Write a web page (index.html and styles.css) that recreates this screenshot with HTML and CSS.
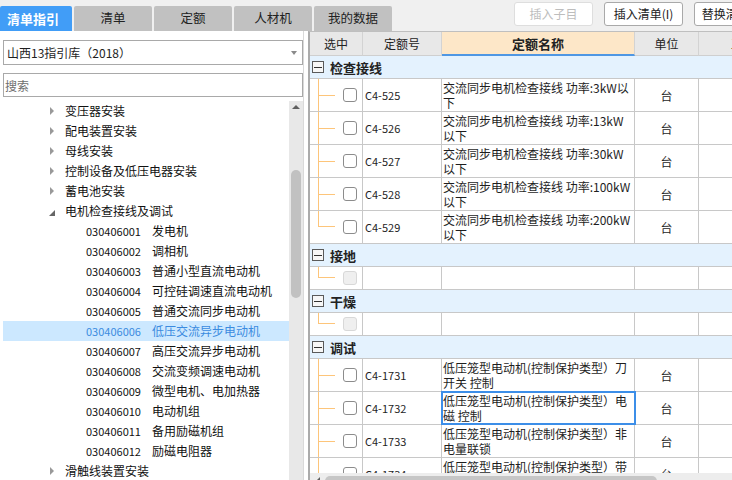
FILE: index.html
```html
<!DOCTYPE html>
<html lang="zh-CN">
<head>
<meta charset="utf-8">
<title>清单指引</title>
<link rel="stylesheet" href="styles.css">
</head>
<body>
<header class="topbar">
  <nav class="tabs">
    <div class="tab active">清单指引</div>
    <div class="tab">清单</div>
    <div class="tab">定额</div>
    <div class="tab">人材机</div>
    <div class="tab">我的数据</div>
  </nav>
  <div class="actions">
    <button class="btn" disabled>插入子目</button>
    <button class="btn">插入清单(I)</button>
    <button class="btn">替换清单(R)</button>
  </div>
</header>
<main class="main">
  <aside class="left">
    <div class="select"><span>山西13指引库（2018）</span><span class="caret"></span></div>
    <input class="search" type="text" placeholder="搜索">
    <div class="tree-wrap">
      <ul class="tree">
        <li class="node"><span class="arrow"></span>变压器安装</li>
        <li class="node"><span class="arrow"></span>配电装置安装</li>
        <li class="node"><span class="arrow"></span>母线安装</li>
        <li class="node"><span class="arrow"></span>控制设备及低压电器安装</li>
        <li class="node"><span class="arrow"></span>蓄电池安装</li>
        <li class="node"><span class="arrow open"></span>电机检查接线及调试</li>
        <li class="node leaf"><span class="code">030406001</span>发电机</li>
        <li class="node leaf"><span class="code">030406002</span>调相机</li>
        <li class="node leaf"><span class="code">030406003</span>普通小型直流电动机</li>
        <li class="node leaf"><span class="code">030406004</span>可控硅调速直流电动机</li>
        <li class="node leaf"><span class="code">030406005</span>普通交流同步电动机</li>
        <li class="node leaf sel"><span class="code">030406006</span>低压交流异步电动机</li>
        <li class="node leaf"><span class="code">030406007</span>高压交流异步电动机</li>
        <li class="node leaf"><span class="code">030406008</span>交流变频调速电动机</li>
        <li class="node leaf"><span class="code">030406009</span>微型电机、电加热器</li>
        <li class="node leaf"><span class="code">030406010</span>电动机组</li>
        <li class="node leaf"><span class="code">030406011</span>备用励磁机组</li>
        <li class="node leaf"><span class="code">030406012</span>励磁电阻器</li>
        <li class="node"><span class="arrow"></span>滑触线装置安装</li>
      </ul>
      <div class="vscroll"><span class="up"></span><span class="thumb"></span></div>
    </div>
  </aside>
  <div class="splitter"></div>
  <section class="right">
    <div class="ghead">
      <div class="h c1">选中</div>
      <div class="h c2">定额号</div>
      <div class="h c3 name">定额名称</div>
      <div class="h c4">单位</div>
      <div class="h c5 more">工程量</div>
    </div>
    <div class="gbody">
      <div class="grp"><span class="minus"></span>检查接线</div>
      <div class="row">
        <div class="c c1 tc"><span class="branch"></span><span class="cb"></span></div>
        <div class="c c2">C4-525</div>
        <div class="c c3">交流同步电机检查接线 功率:3kW以<br>下</div>
        <div class="c c4">台</div>
        <div class="c c5"></div>
      </div>
      <div class="row">
        <div class="c c1 tc"><span class="branch"></span><span class="cb"></span></div>
        <div class="c c2">C4-526</div>
        <div class="c c3">交流同步电机检查接线 功率:13kW<br>以下</div>
        <div class="c c4">台</div>
        <div class="c c5"></div>
      </div>
      <div class="row">
        <div class="c c1 tc"><span class="branch"></span><span class="cb"></span></div>
        <div class="c c2">C4-527</div>
        <div class="c c3">交流同步电机检查接线 功率:30kW<br>以下</div>
        <div class="c c4">台</div>
        <div class="c c5"></div>
      </div>
      <div class="row">
        <div class="c c1 tc"><span class="branch"></span><span class="cb"></span></div>
        <div class="c c2">C4-528</div>
        <div class="c c3">交流同步电机检查接线 功率:100kW<br>以下</div>
        <div class="c c4">台</div>
        <div class="c c5"></div>
      </div>
      <div class="row">
        <div class="c c1 tc"><span class="branch last"></span><span class="cb"></span></div>
        <div class="c c2">C4-529</div>
        <div class="c c3">交流同步电机检查接线 功率:200kW<br>以下</div>
        <div class="c c4">台</div>
        <div class="c c5"></div>
      </div>
      <div class="grp"><span class="minus"></span>接地</div>
      <div class="row short">
        <div class="c c1 tc"><span class="branch last"></span><span class="cb off"></span></div>
        <div class="c c2"></div>
        <div class="c c3"></div>
        <div class="c c4"></div>
        <div class="c c5"></div>
      </div>
      <div class="grp"><span class="minus"></span>干燥</div>
      <div class="row short">
        <div class="c c1 tc"><span class="branch last"></span><span class="cb off"></span></div>
        <div class="c c2"></div>
        <div class="c c3"></div>
        <div class="c c4"></div>
        <div class="c c5"></div>
      </div>
      <div class="grp"><span class="minus"></span>调试</div>
      <div class="row">
        <div class="c c1 tc"><span class="branch"></span><span class="cb"></span></div>
        <div class="c c2">C4-1731</div>
        <div class="c c3">低压笼型电动机(控制保护类型）刀<br>开关 控制</div>
        <div class="c c4">台</div>
        <div class="c c5"></div>
      </div>
      <div class="row">
        <div class="c c1 tc"><span class="branch"></span><span class="cb"></span></div>
        <div class="c c2">C4-1732</div>
        <div class="c c3 focus">低压笼型电动机(控制保护类型）电<br>磁 控制</div>
        <div class="c c4">台</div>
        <div class="c c5"></div>
      </div>
      <div class="row">
        <div class="c c1 tc"><span class="branch"></span><span class="cb"></span></div>
        <div class="c c2">C4-1733</div>
        <div class="c c3">低压笼型电动机(控制保护类型）非<br>电量联锁</div>
        <div class="c c4">台</div>
        <div class="c c5"></div>
      </div>
      <div class="row">
        <div class="c c1 tc"><span class="branch"></span><span class="cb"></span></div>
        <div class="c c2">C4-1734</div>
        <div class="c c3">低压笼型电动机(控制保护类型）带<br>电阻器 控制</div>
        <div class="c c4">台</div>
        <div class="c c5"></div>
      </div>
    </div>
    <div class="hscroll"><span class="larrow"></span><span class="hthumb"></span></div>
  </section>
</main>
</body>
</html>
```

FILE: styles.css
```css
html, body {
  margin: 0;
  padding: 0;
}
body {
  width: 732px;
  height: 480px;
  overflow: hidden;
  background: #f0f0f0;
  font-family: "Noto Sans CJK SC", "Noto Sans", sans-serif;
  font-size: 12px;
  color: #1e1e1e;
}

/* ---------- top bar ---------- */
.topbar {
  display: flex;
  height: 31px;
  overflow: hidden;
}
.tabs {
  display: flex;
  align-items: flex-end;
  gap: 2px;
  flex: none;
}
.tab {
  width: 78px;
  height: 25px;
  box-sizing: border-box;
  background: #c1c1c1;
  border-radius: 2px 2px 0 0;
  display: flex;
  align-items: center;
  justify-content: center;
  font-size: 12.5px;
  line-height: 1;
  color: #222;
}
.tab.active {
  width: 72px;
  padding-right: 6px;
  background: #419df7;
  color: #fff;
  font-weight: bold;
  font-size: 13px;
}
.actions {
  display: flex;
  gap: 11px;
  margin-left: 122px;
  margin-top: 2px;
  align-self: flex-start;
  flex: none;
}
.btn {
  flex: none;
  width: 79px;
  height: 24px;
  padding: 0;
  border: 1px solid #a9a9a9;
  border-radius: 3px;
  background: #fff;
  font-family: inherit;
  font-size: 12px;
  line-height: 1;
  color: #222;
  white-space: nowrap;
}
.btn:disabled {
  border-color: #dedede;
  color: #bdbdbd;
}

/* ---------- main ---------- */
.main {
  display: flex;
  height: 449px;
}
.left {
  width: 304px;
  flex: none;
  box-sizing: border-box;
  background: #fff;
  border-right: 1px solid #d9d9d9;
  display: flex;
  flex-direction: column;
}
.select {
  margin: 9px 0 0 3px;
  width: 300px;
  height: 25px;
  box-sizing: border-box;
  border: 1px solid #a9a9a9;
  padding-left: 3px;
  display: flex;
  align-items: center;
  font-size: 12px;
  line-height: 1;
}
.caret {
  margin-left: auto;
  margin-right: 5px;
  width: 0;
  height: 0;
  border-top: 4px solid #8a8a8a;
  border-left: 3px solid transparent;
  border-right: 3px solid transparent;
}
.search {
  margin: 8px 0 0 3px;
  width: 300px;
  height: 24px;
  box-sizing: border-box;
  border: 1px solid #a9a9a9;
  padding: 0 0 0 1px;
  font-family: inherit;
  font-size: 12px;
  outline: none;
}
.search::placeholder {
  color: #6e6e6e;
}
.tree-wrap {
  margin: 4px 0 0 3px;
  display: flex;
  flex: 1;
  min-height: 0;
  overflow: hidden;
}
.tree {
  width: 286px;
  flex: none;
  list-style: none;
  margin: 0;
  padding: 0;
}
.node {
  display: flex;
  align-items: center;
  height: 20px;
  padding-left: 47px;
  white-space: nowrap;
  line-height: 1;
  font-size: 12px;
  color: #111;
}
.node.leaf {
  padding-left: 83px;
}
.node.sel {
  background: #cce8ff;
  color: #3b8be0;
}
.arrow {
  width: 0;
  height: 0;
  border-left: 4px solid #999;
  border-top: 4px solid transparent;
  border-bottom: 4px solid transparent;
  margin-right: 11px;
}
.arrow.open {
  margin-left: -1px;
  margin-right: 10px;
  margin-top: 4px;
  border-left: none;
  border-bottom: none;
  border-right: 6px solid #666;
  border-top: 6px solid transparent;
}
.code {
  width: 66px;
  flex: none;
  font-size: 11px;
}
.vscroll {
  width: 14px;
  flex: none;
  background: #e8e8e8;
  display: flex;
  flex-direction: column;
  align-items: center;
}
.up {
  margin-top: 4px;
  width: 0;
  height: 0;
  border-bottom: 4px solid #606060;
  border-left: 4px solid transparent;
  border-right: 4px solid transparent;
}
.thumb {
  margin-top: 61px;
  width: 10px;
  height: 128px;
  background: #c1c1c1;
  border-radius: 5px;
}
.splitter {
  width: 4px;
  flex: none;
  background: #fff;
}

/* ---------- grid ---------- */
.right {
  flex: 1;
  min-width: 0;
  display: flex;
  flex-direction: column;
  background: #fff;
  border-top: 1px solid #bfbfbf;
  border-left: 2px solid #ababab;
  overflow: hidden;
}
.ghead {
  display: flex;
  height: 24px;
  flex: none;
  background: #e8e8e8;
}
.h {
  box-sizing: border-box;
  height: 24px;
  border-right: 1px solid #d3d3d3;
  border-bottom: 1px solid #cfcfcf;
  display: flex;
  align-items: center;
  justify-content: center;
  flex: none;
  font-size: 12px;
  line-height: 1;
  color: #222;
}
.h.name {
  background: #fde7c8;
  font-weight: bold;
  font-size: 13px;
  border-bottom: 2px solid #4f97e3;
}
.h.more {
  justify-content: flex-start;
  padding-left: 32px;
}
.c1 { width: 53px; }
.c2 { width: 79px; }
.c3 { width: 193px; }
.c4 { width: 64px; }
.c5 { width: 100px; }

.gbody {
  height: 417px;
  flex: none;
  overflow: hidden;
}
.grp {
  height: 23px;
  box-sizing: border-box;
  background: #e4f2fe;
  border-bottom: 1px solid #c8c8c8;
  display: flex;
  align-items: center;
  font-weight: bold;
  font-size: 13px;
  line-height: 1;
  color: #222;
}
.minus {
  width: 12px;
  height: 12px;
  box-sizing: border-box;
  border: 1px solid #5a5a5a;
  background: #f7f7f7;
  margin: 0 6px 0 2px;
  display: flex;
  align-items: center;
  justify-content: center;
}
.minus::after {
  content: "";
  width: 8px;
  height: 1px;
  background: #333;
}
.row {
  display: flex;
  height: 33px;
  box-sizing: border-box;
  border-bottom: 1px solid #c8c8c8;
}
.row.short {
  height: 23px;
}
.c {
  box-sizing: border-box;
  border-right: 1px solid #c8c8c8;
  flex: none;
  display: flex;
  align-items: center;
  white-space: nowrap;
}
.c.c2 {
  padding-left: 2px;
  font-size: 11px;
}
.c.c3 {
  padding-left: 1px;
  line-height: 15px;
  font-size: 12px;
}
.c.c4 {
  justify-content: center;
  font-size: 12px;
}
.c.focus {
  outline: 2px solid #3c8ee8;
  outline-offset: -1px;
}
.tc {
  padding-left: 8px;
  align-items: stretch;
}
.branch {
  width: 17px;
  flex: none;
  box-sizing: border-box;
  border-left: 1px solid #fdc57a;
  display: flex;
  align-items: center;
}
.branch::after {
  content: "";
  flex: 1;
  height: 1px;
  background: #fdc57a;
}
.branch.last {
  height: 50%;
  align-self: flex-start;
  align-items: flex-end;
}
.cb {
  width: 14px;
  height: 14px;
  box-sizing: border-box;
  border: 1px solid #8c8c8c;
  border-radius: 3px;
  background: #fff;
  margin-left: 8px;
  align-self: center;
  flex: none;
}
.cb.off {
  border-color: #d8d8d8;
  background: #efefef;
}
.hscroll {
  height: 17px;
  flex: none;
  background: #ededed;
  display: flex;
  align-items: flex-start;
}
.larrow {
  margin: 4px 0 0 6px;
  width: 0;
  height: 0;
  border-right: 4px solid #606060;
  border-top: 4px solid transparent;
  border-bottom: 4px solid transparent;
}
.hthumb {
  margin: 3px 0 0 5px;
  width: 332px;
  height: 10px;
  border-radius: 5px;
  background: #c6c6c6;
  flex: none;
}
```
